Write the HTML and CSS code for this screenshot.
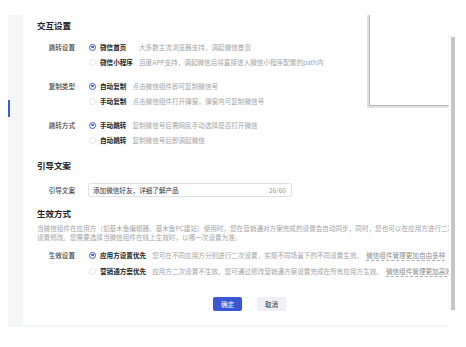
FILE: index.html
```html
<!DOCTYPE html>
<html lang="zh-CN">
<head>
<meta charset="utf-8">
<title>微信组件设置</title>
<link rel="stylesheet" href="styles.css">
</head>
<body>
<div class="frame">
  <div class="side"><span class="side-mark"></span></div>
  <div class="card">
    <div class="content">
      <h2 class="title t1">交互设置</h2>

      <div class="item">
        <div class="label">跳转设置</div>
        <div class="opts">
          <span class="radio on"></span><span class="opt">微信首页</span><span class="desc">大多数主流浏览器支持，调起微信首页</span>
          <span class="radio"></span><span class="opt">微信小程序</span><span class="desc">百度APP支持，调起微信后将直接进入微信小程序配置的path内</span>
        </div>
      </div>

      <div class="item">
        <div class="label">复制类型</div>
        <div class="opts">
          <span class="radio on"></span><span class="opt">自动复制</span><span class="desc">点击微信组件即可复制微信号</span>
          <span class="radio"></span><span class="opt">手动复制</span><span class="desc">点击微信组件打开弹窗，弹窗内可复制微信号</span>
        </div>
      </div>

      <div class="item">
        <div class="label">跳转方式</div>
        <div class="opts">
          <span class="radio on"></span><span class="opt">手动跳转</span><span class="desc">复制微信号后需网民手动选择是否打开微信</span>
          <span class="radio"></span><span class="opt">自动跳转</span><span class="desc">复制微信号后即调起微信</span>
        </div>
      </div>

      <h2 class="title t2">引导文案</h2>
      <div class="item input-item">
        <div class="label">引导文案</div>
        <div class="input"><span class="input-text">添加微信好友，详细了解产品</span><span class="count">26/60</span></div>
      </div>

      <h2 class="title t3">生效方式</h2>
      <p class="note">当微信组件在应用方（如基木鱼编辑器、基木鱼PC建站）使用时，您在营销通对方案完成的设置会自动同步，同时，您也可以在应用方进行二次<br>设置修改。您需要选择当微信组件在线上生效时，以哪一次设置为准。</p>

      <div class="item item-last">
        <div class="label">生效设置</div>
        <div class="opts opts-wide">
          <span class="radio on"></span><span class="opt">应用方设置优先</span><span class="desc">您可在不同应用方分别进行二次设置，实现不同场景下的不同设置生效。<span class="link">微信组件管理更加自由多样</span></span>
          <span class="radio"></span><span class="opt">营销通方案优先</span><span class="desc">应用方二次设置不生效，您可通过修改营销通方案设置完成在所有应用方生效。<span class="link">微信组件管理更加高效</span></span>
        </div>
      </div>

      <div class="actions">
        <button class="btn primary">确定</button>
        <button class="btn">取消</button>
      </div>
    </div>
    <div class="preview"></div>
  </div>
  <div class="scroll"><span class="thumb"></span></div>
</div>
</body>
</html>
```
FILE: styles.css
```css
* { box-sizing: border-box; }
html, body { margin: 0; padding: 0; background: #fff; }
body {
  font-family: "Noto Sans CJK SC", "Noto Sans", sans-serif;
  font-size: 6.6px;
  color: #333;
}
.frame {
  margin: 15px 0 0 8px;
  width: 447px;
  height: 312px;
  display: flex;
  background: #f5f6f8;
  padding-bottom: 2px;
}
.side {
  width: 15px;
  flex: none;
}
.side-mark {
  display: block;
  width: 1.5px;
  height: 17px;
  margin-top: 85px;
  background: #3a5bd9;
}
.card {
  position: relative;
  width: 426px;
  flex: none;
  background: #fff;
  overflow: hidden;
}
.preview {
  position: absolute;
  z-index: 2;
  left: 346px;
  top: -4px;
  width: 81px;
  height: 95px;
  border-left: 1px solid #b8b8b8;
  border-bottom: 1px solid #b8b8b8;
  box-shadow: -2px 2px 0 0 #e0e0e0;
  background: #fff;
}
.content {
  padding: 4px 0 0 14px;
  white-space: nowrap;
}
.title {
  margin: 0;
  font-size: 8.5px;
  line-height: 12px;
  font-weight: 700;
  color: #1d2129;
}
.t1 { margin-bottom: 11px; }
.t2 { margin: 12px 0 12px; }
.t3 { margin: 10px 0 0; }
.item {
  display: flex;
  align-items: flex-start;
  margin-bottom: 14px;
}
.label {
  width: 38px;
  flex: none;
  text-align: right;
  margin-right: 14px;
  line-height: 10px;
  color: #444;
  font-weight: 500;
}
.opts {
  display: grid;
  grid-template-columns: 7px auto auto;
  column-gap: 0;
  row-gap: 5px;
  align-items: center;
  line-height: 10px;
}
.opts-wide { row-gap: 6px; }
.radio {
  width: 7px;
  height: 7px;
  border-radius: 50%;
  border: 1px solid #e1e4ea;
  background: #fff;
  position: relative;
}
.radio.on {
  border: 1.6px solid #3a5bd9;
}
.radio.on::after {
  content: "";
  position: absolute;
  left: 50%;
  top: 50%;
  width: 2.6px;
  height: 2.6px;
  margin: -1.3px 0 0 -1.3px;
  border-radius: 50%;
  background: #3a5bd9;
}
.opt {
  padding-left: 4px;
  padding-right: 6px;
  color: #222;
  font-weight: 600;
}
.desc {
  color: #a3a3a3;
}
.link {
  color: #8a8a8a;
  border-bottom: 1px dashed #b0b0b0;
  margin-left: 3px;
}
.input-item {
  margin-bottom: 0;
  align-items: center;
}
.input-item .label { margin-right: 13px; }
.input {
  width: 204px;
  height: 14px;
  border: 1px solid #dde3ee;
  border-radius: 2px;
  display: flex;
  align-items: center;
  justify-content: space-between;
  padding: 0 5px 0 4px;
  line-height: 10px;
}
.input-text { color: #333; }
.count { color: #999; }
.note {
  margin: 5px 0 0;
  line-height: 9px;
  color: #a3a3a3;
  font-size: 6.6px;
}
.item-last { margin-top: 8px; margin-bottom: 0; }
.actions {
  display: flex;
  gap: 15px;
  padding-left: 176px;
  margin-top: 21px;
}
.btn {
  width: 29px;
  height: 14px;
  border: none;
  border-radius: 2px;
  font-family: inherit;
  font-size: 6.6px;
  padding: 0;
  background: #eef0f5;
  color: #333;
}
.btn.primary {
  background: #3a57d6;
  color: #fff;
}
.scroll {
  width: 6px;
  flex: none;
  background: #fff;
  display: flex;
  flex-direction: column;
  align-items: flex-end;
  margin-bottom: -2px;
}
.thumb {
  display: block;
  width: 4px;
  height: 273px;
  margin-top: 22px;
  background: #c6c6c6;
}
```
